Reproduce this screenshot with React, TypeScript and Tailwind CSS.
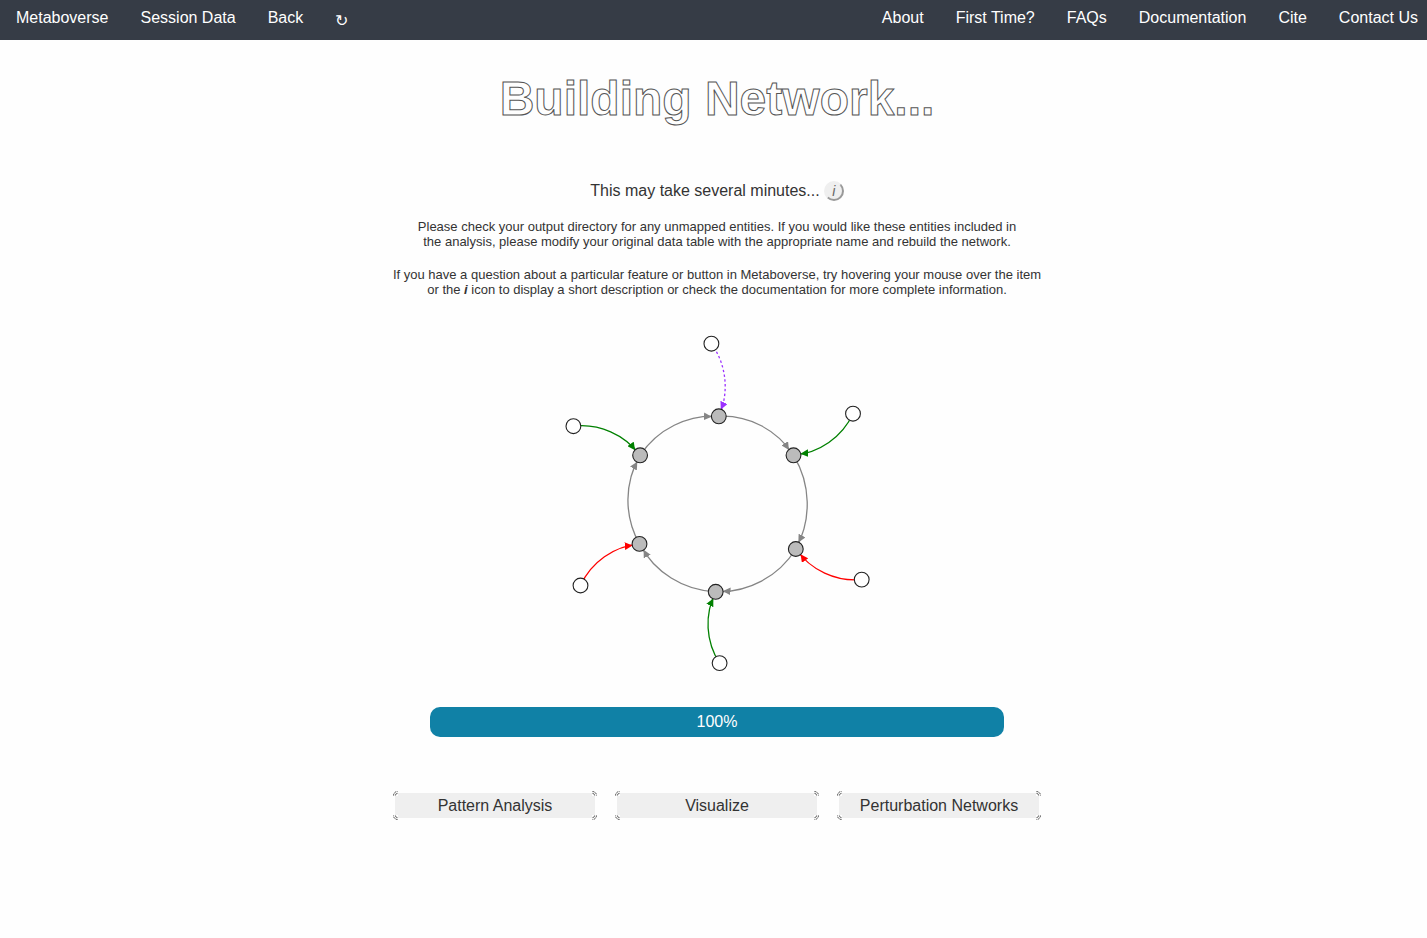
import React from "react";

const leftLinks = ["Metaboverse", "Session Data", "Back"];
const rightLinks = ["About", "First Time?", "FAQs", "Documentation", "Cite", "Contact Us"];
const actions = ["Pattern Analysis", "Visualize", "Perturbation Networks"];

type Point = [number, number];

const core: Point[] = [
  [161.8, 87.3],
  [236.5, 126.3],
  [238.8, 220],
  [158.7, 262.8],
  [82.5, 214.9],
  [83.1, 126.3],
];

const satellites: { at: Point; target: number; kind: string }[] = [
  { at: [154.4, 14.7], target: 0, kind: "purple" },
  { at: [296, 84.7], target: 1, kind: "green" },
  { at: [304.7, 250.6], target: 2, kind: "red" },
  { at: [162.6, 334.1], target: 3, kind: "green" },
  { at: [23.5, 256.5], target: 4, kind: "red" },
  { at: [16.4, 97.2], target: 5, kind: "green" },
];

const colors: Record<string, string> = {
  gray: "#858585",
  green: "#008000",
  red: "#ff0000",
  purple: "#9b30ff",
};

function arc(a: Point, b: Point) {
  const r = Math.hypot(b[0] - a[0], b[1] - a[1]);
  return `M${a[0]},${a[1]}A${r},${r} 0 0,1 ${b[0]},${b[1]}`;
}

function Network() {
  return (
    <svg width="320" height="344" viewBox="0 0 320 344" className="mx-auto block" role="img" aria-label="Reaction network">
      <defs>
        {Object.keys(colors).map((k) => (
          <marker key={k} id={`arrow-${k}`} viewBox="0 -5 10 10" refX="19" refY="-1.2" markerWidth="6" markerHeight="6" orient="auto">
            <path d="M0,-5L10,0L0,5Z" fill={colors[k]} />
          </marker>
        ))}
      </defs>
      <g fill="none" strokeWidth="1.3">
        {core.map((p, i) => (
          <path key={i} d={arc(p, core[(i + 1) % 6])} stroke={colors.gray} markerEnd="url(#arrow-gray)" />
        ))}
        {satellites.map((s, i) => (
          <path
            key={i}
            d={arc(s.at, core[s.target])}
            stroke={colors[s.kind]}
            strokeDasharray={s.kind === "purple" ? "2.4 2.4" : undefined}
            markerEnd={`url(#arrow-${s.kind})`}
          />
        ))}
      </g>
      <g stroke="#222" strokeWidth="1.1">
        {core.map(([x, y], i) => (
          <circle key={i} cx={x} cy={y} r="7.4" fill="#bbb" />
        ))}
        {satellites.map(({ at: [x, y] }, i) => (
          <circle key={i} cx={x} cy={y} r="7.4" fill="#fff" />
        ))}
      </g>
    </svg>
  );
}

function Corner({ className }: { className: string }) {
  return (
    <svg width="6" height="6" viewBox="0 0 6 6" className={`absolute ${className}`} aria-hidden="true">
      <path d="M0 0H5V5H0Z" fill="#fefefe" />
      <path d="M0.5 4.5A4 4 0 0 1 4.5 0.5" fill="none" stroke="#333" strokeWidth="0.9" strokeDasharray="2 0.7" />
      <path d="M2.3 4.6A2.4 2.4 0 0 1 4.6 2.3" fill="none" stroke="#444" strokeWidth="0.8" />
    </svg>
  );
}

export default function App() {
  return (
    <div className="min-h-screen bg-[#fefefe] font-['Liberation_Sans',Arial,sans-serif] text-[#333]">
      <nav className="flex h-10 justify-between bg-[#363c46] pr-[9px] pl-4 text-base leading-9 text-white">
        <div className="flex gap-8">
          {leftLinks.map((l) => (
            <a key={l} href="#">{l}</a>
          ))}
          <a href="#" aria-label="Refresh" className="pt-[3px]">↻</a>
        </div>
        <div className="flex gap-8">
          {rightLinks.map((l) => (
            <a key={l} href="#">{l}</a>
          ))}
        </div>
      </nav>

      <main className="flex flex-col items-center pl-[7px] text-center">
        <h1 className="mt-8 text-[48px] leading-[54px] font-bold text-[#fefefe] [-webkit-text-stroke:1px_#555]">
          Building Network...
        </h1>

        <div className="mt-[54px] flex items-center gap-1 leading-[22px]">
          <span>This may take several minutes...</span>
          <button
            type="button"
            aria-label="More information"
            className="flex size-5 items-center justify-center rounded-full border-2 border-t-[#efefef] border-r-[#999] border-b-[#999] border-l-[#efefef] bg-[#efefef] text-sm leading-none text-[#666] italic"
          >
            i
          </button>
        </div>

        <p className="mt-[17px] text-[13px] leading-[15px]">
          Please check your output directory for any unmapped entities. If you would like these entities included in
          <br />
          the analysis, please modify your original data table with the appropriate name and rebuild the network.
        </p>
        <p className="mt-[18px] text-[13px] leading-[15px]">
          If you have a question about a particular feature or button in Metaboverse, try hovering your mouse over the item
          <br />
          or the <b><i>i</i></b> icon to display a short description or check the documentation for more complete information.
        </p>

        <div className="mt-8">
          <Network />
        </div>

        <div
          role="progressbar"
          aria-valuenow={100}
          aria-valuemin={0}
          aria-valuemax={100}
          className="mt-[34px] w-full max-w-[574px] rounded-[10px] bg-[#1081a6] leading-[30px] text-white"
        >
          100%
        </div>

        <div className="mt-[54px] flex flex-wrap justify-center gap-[18px]">
          {actions.map((a) => (
            <button
              key={a}
              type="button"
              className="relative w-[204px] border-2 border-[#fefefe] bg-[#efefef] leading-[25px]"
            >
              {a}
              <Corner className="-top-[2px] -left-[2px]" />
              <Corner className="-top-[2px] -right-[2px] rotate-90" />
              <Corner className="-right-[2px] -bottom-[2px] rotate-180" />
              <Corner className="-bottom-[2px] -left-[2px] -rotate-90" />
            </button>
          ))}
        </div>
      </main>
    </div>
  );
}
